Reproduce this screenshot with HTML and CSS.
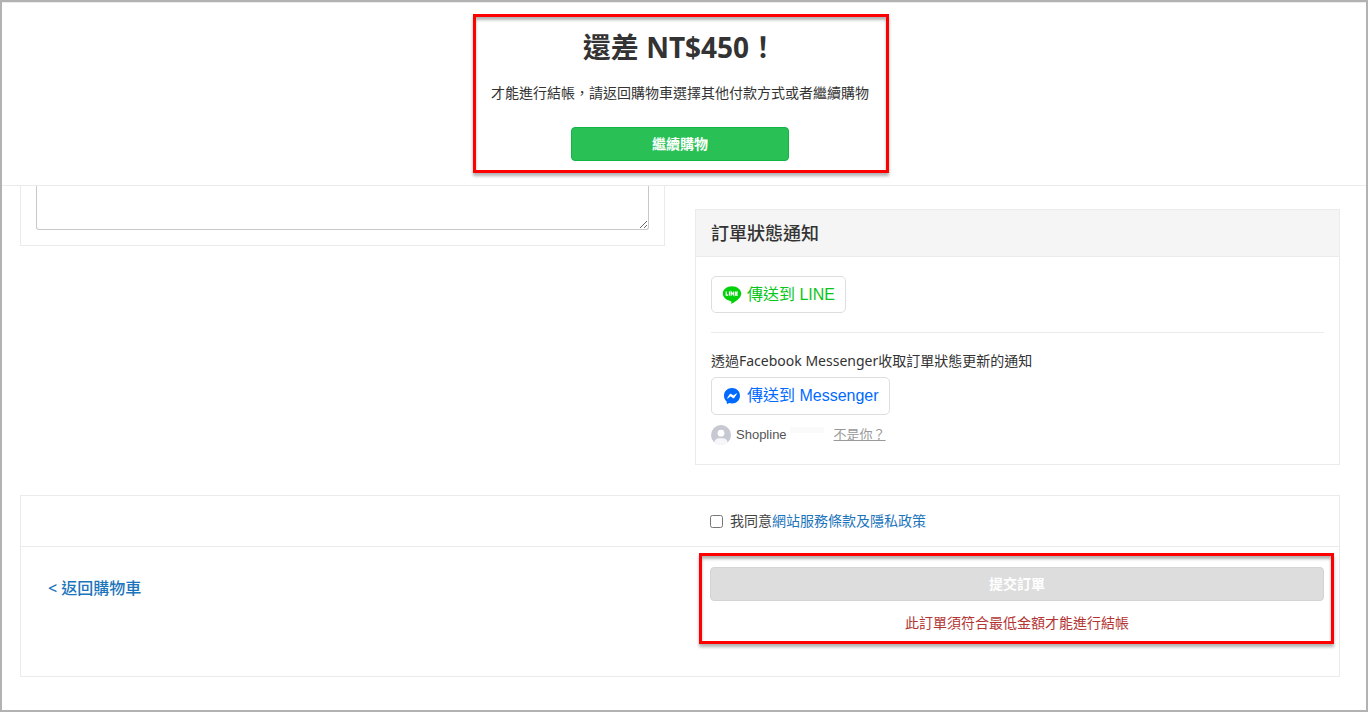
FILE: index.html
```html
<!DOCTYPE html>
<html lang="zh-Hant">
<head>
<meta charset="utf-8">
<meta name="viewport" content="width=device-width, initial-scale=1">
<title>結帳</title>
<link rel="stylesheet" href="styles.css">
</head>
<body>
<div class="page">
  <header class="banner">
    <div class="banner-box marked">
      <h1 class="banner-title">還差 NT$450！</h1>
      <p class="banner-text">才能進行結帳，請返回購物車選擇其他付款方式或者繼續購物</p>
      <button class="btn btn-green" type="button">繼續購物</button>
    </div>
  </header>

  <main class="content">
    <div class="columns">
      <section class="card remark">
        <textarea class="remark-input" aria-label="訂單備註"></textarea>
      </section>

      <section class="card notify">
        <h2 class="card-title">訂單狀態通知</h2>
        <div class="card-body">
          <button class="send send-line" type="button">
            <svg class="send-icon" viewBox="0 0 20 20" aria-hidden="true">
              <path fill="#00d108" d="M10 1.200C4.900 1.200.8 4.500.8 8.600c0 3.700 3.300 6.700 7.700 7.300.9.200.9.500.8 1.200l-.1 1.100c0 .5.300.6.800.3 2.400-1.300 5.700-3.500 7.600-5.800 1.100-1.200 1.600-2.600 1.600-4.100 0-4.100-4.100-7.400-9.200-7.400z"/>
              <path fill="none" stroke="#fff" stroke-width="1.200" d="M4.200 6.600v3.500h2M7.500 6.500v4.100M9.200 10.700V6.900l2.500 3.200V6.500M15.800 7.100h-2.200v3h2.200M13.600 8.600h2"/>
            </svg>
            <span>傳送到 LINE</span>
          </button>
          <hr class="rule">
          <p class="notify-text">透過Facebook Messenger收取訂單狀態更新的通知</p>
          <button class="send send-messenger" type="button">
            <svg class="send-icon" viewBox="0 0 20 20" aria-hidden="true">
              <path fill="#006aff" d="M10 2C5.500 2 2 5.200 2 9.700c0 2.300 1 4.300 2.500 5.600.2.200.2.300.2.600l.1 1.400c0 .5.400.7.900.5l1.700-.7c.9.200 1.700.3 2.600.3 4.500 0 8-3.200 8-7.700S14.500 2 10 2z"/>
              <path fill="#fff" d="M5.200 12l2.400-3.800c.4-.6 1.200-.7 1.700-.3l1.900 1.400c.2.100.4.100.5 0l2.500-1.900c.4-.3.800.2.600.6l-2.400 3.700c-.4.600-1.200.8-1.700.3l-1.900-1.400c-.2-.1-.4-.1-.5 0L5.800 12.500c-.4.300-.9-.1-.6-.5z"/>
            </svg>
            <span>傳送到 Messenger</span>
          </button>
          <div class="profile">
            <svg class="avatar" viewBox="0 0 20 20" aria-hidden="true">
              <circle cx="10" cy="10" r="10" fill="#c6c8d2"/>
              <circle cx="10" cy="8.200" r="3.400" fill="#fff"/>
              <path fill="#f7f7f9" d="M3.300 17.400c.4-2.700 2.400-4.200 4.700-4.200h4c2.300 0 4.300 1.500 4.700 4.200A10 10 0 0 1 10 20a10 10 0 0 1-6.700-2.600z"/>
            </svg>
            <span class="profile-name">Shopline</span>
            <span class="profile-mask"></span>
            <a class="profile-switch" href="#">不是你？</a>
          </div>
        </div>
      </section>
    </div>

    <section class="card checkout">
      <div class="terms">
        <input class="terms-check" type="checkbox" id="agree">
        <label for="agree">我同意<a class="link" href="#">網站服務條款及隱私政策</a></label>
      </div>
      <div class="actions">
        <a class="link back" href="#">&lt; 返回購物車</a>
        <div class="submit-box marked">
          <button class="btn btn-disabled" type="submit" disabled>提交訂單</button>
          <p class="error">此訂單須符合最低金額才能進行結帳</p>
        </div>
      </div>
    </section>
  </main>
</div>
</body>
</html>
```
FILE: styles.css
```css
* {
  box-sizing: border-box;
}

body {
  margin: 0;
  color: #333;
  background: #fff;
  font: 14px/20px "Noto Sans", "Noto Sans CJK TC", sans-serif;
}

h1, h2, p {
  margin: 0;
}

button {
  font-family: inherit;
}

.page {
  min-height: 100vh;
  border: 2px solid #b2b2b2;
}

.marked {
  border: 3px solid #f00;
  box-shadow: 0 3px 3px rgba(0, 0, 0, .3), inset 0 3px 3px rgba(0, 0, 0, .3);
}

.banner {
  display: flex;
  justify-content: center;
  padding: 11px 6px 12px 0;
  border-top: 1px solid #ebebeb;
  border-bottom: 1px solid #ebebeb;
}

.banner-box {
  display: flex;
  flex-direction: column;
  align-items: center;
  padding: 10px 17px 9px 15px;
}

.banner-title {
  font-size: 28px;
  line-height: 40px;
}

.banner-text {
  margin: 16px 0 24px;
}

.btn {
  height: 34px;
  padding: 0 12px 2px;
  border: 1px solid;
  border-radius: 4px;
  color: #fff;
  font-size: 14px;
  font-weight: 700;
}

.btn-green {
  width: 218px;
  border-color: #10b443;
  background: #29c156;
}

.btn-disabled {
  width: 100%;
  border-color: #d4d4d4;
  background: #ddd;
}

.content {
  padding: 0 26px 33px 18px;
}

.columns {
  display: grid;
  grid-template-columns: 1fr 1fr;
  align-items: start;
  gap: 30px;
}

.card {
  border: 1px solid #ebebeb;
}

.remark {
  padding: 0 15px 15px;
  border-top: 0;
}

.remark-input {
  display: block;
  width: 100%;
  height: 44px;
  border: 1px solid #c8c8c8;
  border-top: 0;
  border-radius: 0 0 3px 3px;
}

.notify {
  margin-top: 23px;
}

.card-title {
  padding: 11px 15px;
  border-bottom: 1px solid #ebebeb;
  background: #f5f5f5;
  font-size: 18px;
  line-height: 24px;
  font-weight: 500;
}

.card-body {
  padding: 19px 15px;
}

.send {
  display: flex;
  align-items: center;
  gap: 5px;
  height: 37px;
  padding: 0 10px;
  border: 1px solid #dedede;
  border-radius: 5px;
  background: #fff;
  font: 16px/24px "Liberation Sans", "Noto Sans CJK TC", sans-serif;
}

.send-icon {
  width: 20px;
  height: 20px;
}

.send-line {
  color: #0bc61a;
}

.send-messenger {
  height: 38px;
  color: #006aff;
}

.rule {
  margin: 19px 0 18px;
  border: 0;
  border-top: 1px solid #ebebeb;
}

.notify-text {
  margin-bottom: 6px;
}

.profile {
  display: flex;
  align-items: center;
  margin-top: 10px;
  font: 13px/20px "Liberation Sans", "Noto Sans CJK TC", sans-serif;
}

.avatar {
  width: 20px;
  height: 20px;
}

.profile-name {
  margin: 0 3px 0 5px;
  color: #555;
}

.profile-mask {
  width: 34px;
  height: 6px;
  margin: 0 10px 10px 0;
  background: #fafafa;
}

.profile-switch {
  color: #999;
}

.checkout {
  margin-top: 30px;
}

.terms {
  display: flex;
  align-items: center;
  padding: 15px 15px 15px calc(50% + 30px);
  border-bottom: 1px solid #ebebeb;
  color: #444;
}

.terms-check {
  width: 13px;
  height: 13px;
  margin: 0 7px 0 0;
}

.link {
  color: #1c75bc;
  text-decoration: none;
}

.actions {
  display: grid;
  grid-template-columns: 1fr 1fr;
  align-items: start;
}

.back {
  justify-self: start;
  margin: 29px 0 0 27px;
  font-size: 16px;
  line-height: 24px;
  font-weight: 500;
}

.submit-box {
  margin: 6px 5px 32px 19px;
  padding: 11px 7px 8px 8px;
}

.error {
  margin-top: 12px;
  color: #b43434;
  text-align: center;
}
```
